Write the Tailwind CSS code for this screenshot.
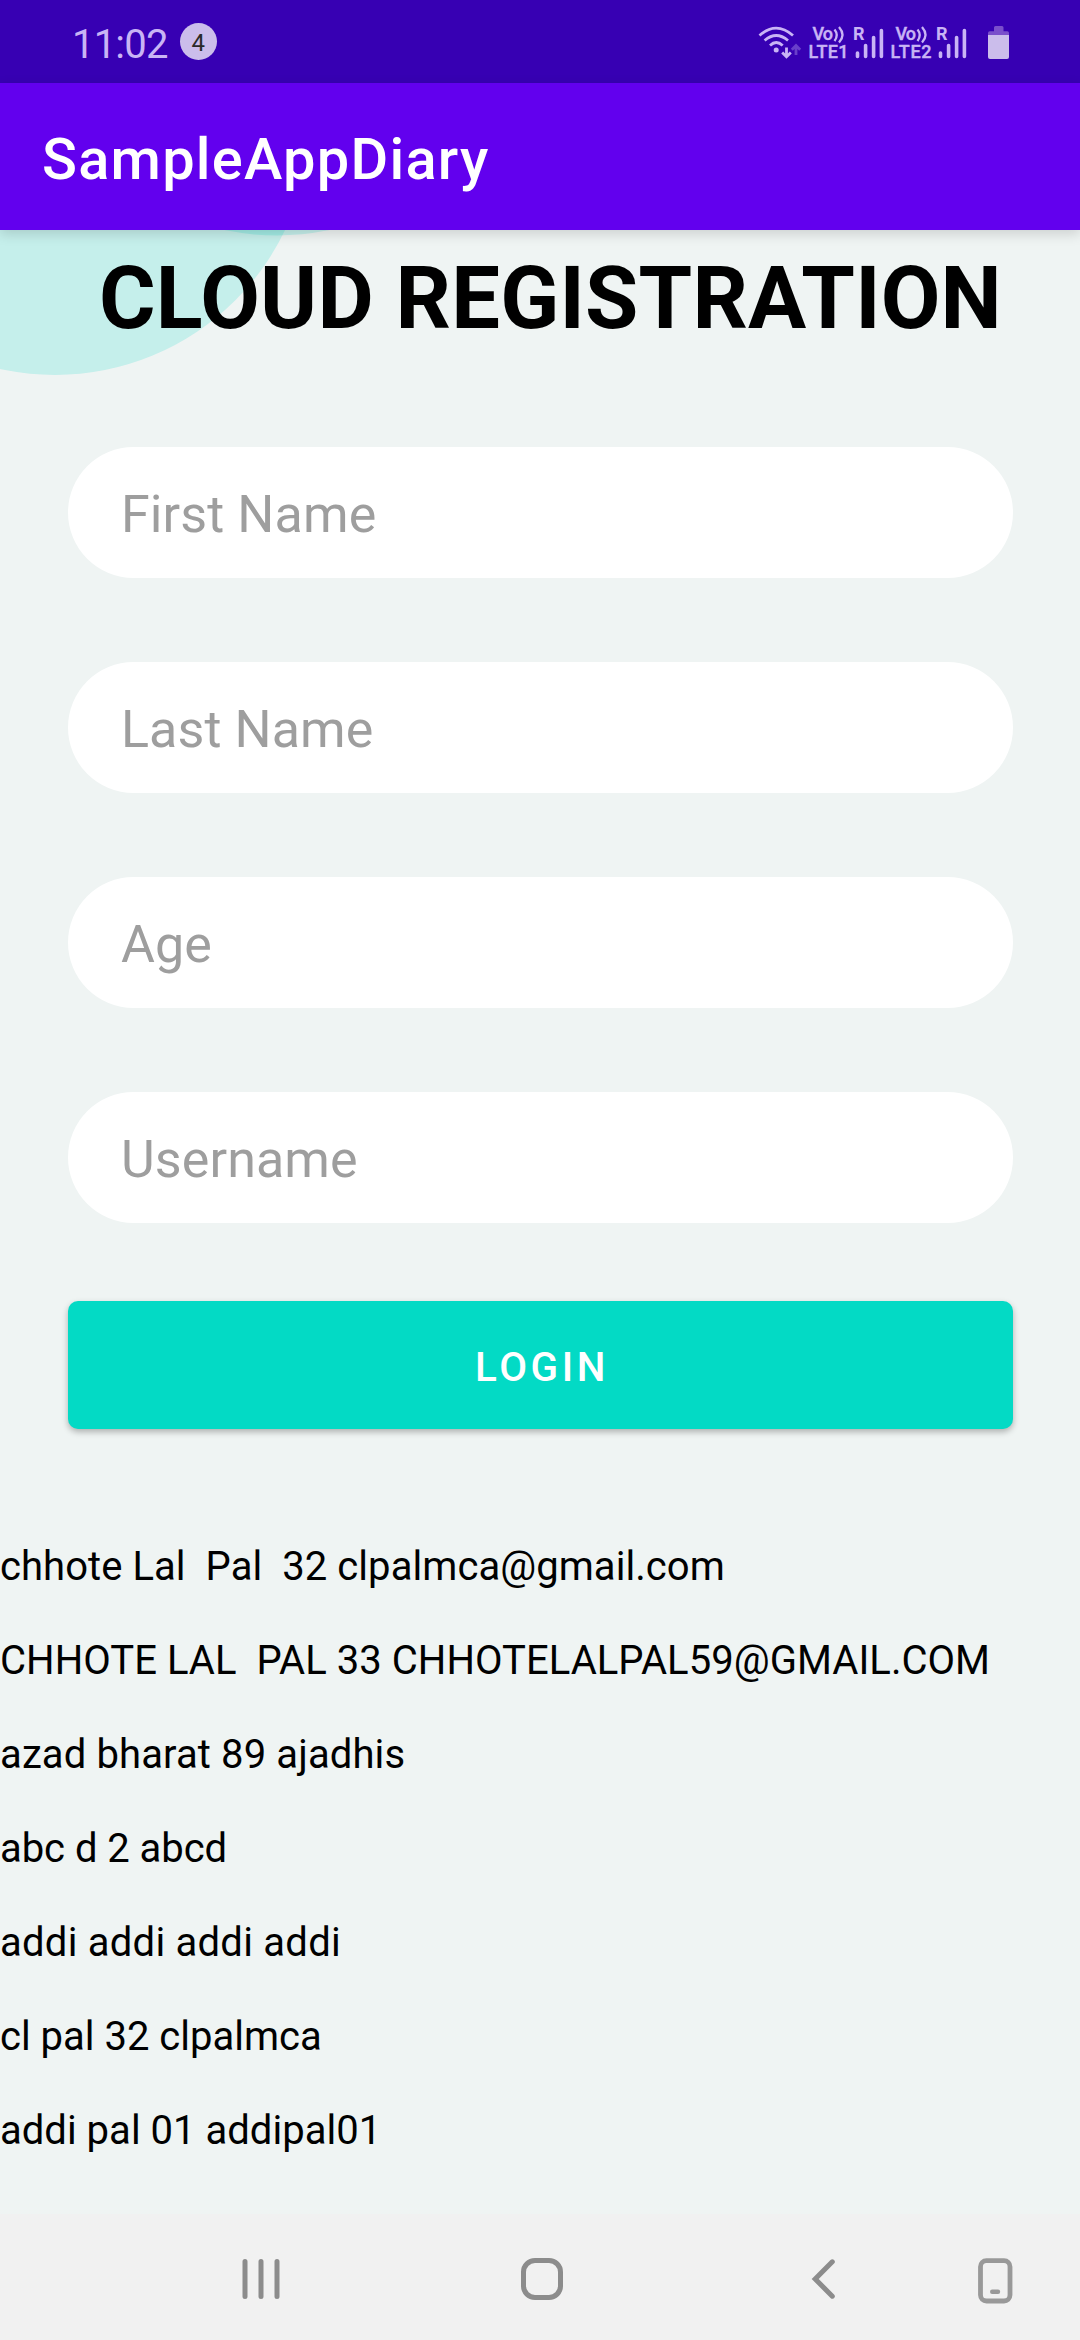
<!DOCTYPE html>
<html lang="en">
<head>
<meta charset="utf-8">
<title>SampleAppDiary</title>
<script src="https://cdn.jsdelivr.net/npm/@tailwindcss/browser@4"></script>
</head>
<body class="flex h-[2340px] w-[1080px] flex-col overflow-hidden bg-[#eff4f3] font-['Roboto',sans-serif]">

  <!-- Status bar -->
  <div class="flex h-[83px] shrink-0 items-center bg-[#3700b3] pr-[71px] pl-[72px] text-[#c9b4f5]">
    <span class="pt-[6px] text-[40px] leading-[48px] tracking-[-0.8px]">11:02</span>
    <span class="ml-[12px] flex size-[37px] items-center justify-center rounded-full bg-[#cbbdeb] pt-[3px] text-[24px] leading-none text-[#2a2a2a]">4</span>
    <div class="ml-auto flex items-center">
      <svg class="h-[83px] w-[46px]" viewBox="756 0 46 83" fill="none" stroke="currentColor" stroke-width="2.8" stroke-linecap="butt">
        <path d="M759.5 35.500Q776.200 20.800 793 35.500M764.600 40.500Q776.200 30.500 788 40.500M770 45.500Q776.200 39.500 782.700 45.500"/>
        <circle cx="776.200" cy="50" r="2.500" fill="currentColor" stroke="none"/>
        <path d="M786.500 47.500V57M782.200 52.500L786.500 56.800L790.800 52.500"/>
        <path class="opacity-35" d="M796 55V46M791.800 49.800L796 45.500L800.200 49.800"/>
      </svg>
      <svg class="h-[83px] w-[83px]" viewBox="802 0 83 83" fill="currentColor">
        <g class="font-['Roboto',sans-serif] text-[18px] font-medium">
          <text x="812.500" y="40" textLength="20.500" stroke="currentColor" stroke-width="0.4">Vo</text>
          <text x="808.500" y="58" textLength="40" stroke="currentColor" stroke-width="0.4">LTE1</text>
          <text x="853" y="40" class="font-bold">R</text>
        </g>
        <path fill="none" stroke="currentColor" stroke-width="2.300" d="M834.500 29.500Q839 35 834.500 41M839 27Q846 35 839 42.500"/>
        <path fill="none" stroke="currentColor" stroke-width="3.600" stroke-linecap="round" d="M857.500 53V56.500M865.600 45.500V56.500M873.600 37.500V56.500M881.400 30.500V56.500"/>
      </svg>
      <svg class="h-[83px] w-[83px]" viewBox="802 0 83 83" fill="currentColor">
        <g class="font-['Roboto',sans-serif] text-[18px] font-medium">
          <text x="812.500" y="40" textLength="20.500" stroke="currentColor" stroke-width="0.4">Vo</text>
          <text x="807.500" y="58" textLength="41" stroke="currentColor" stroke-width="0.4">LTE2</text>
          <text x="853" y="40" class="font-bold">R</text>
        </g>
        <path fill="none" stroke="currentColor" stroke-width="2.300" d="M834.500 29.500Q839 35 834.500 41M839 27Q846 35 839 42.500"/>
        <path fill="none" stroke="currentColor" stroke-width="3.600" stroke-linecap="round" d="M857.500 53V56.500M865.600 45.500V56.500M873.600 37.500V56.500M881.400 30.500V56.500"/>
      </svg>
      <svg class="ml-[20px] h-[83px] w-[21px]" viewBox="988 0 21 83">
        <path fill="#7a4fcb" d="M988 35V33Q988 31.300 989.700 31.300H994V27.500Q994 26 995.500 26H1002Q1003.500 26 1003.500 27.500V31.300H1007.300Q1009 31.300 1009 33V35Z"/>
        <path fill="#cbbdeb" d="M988 35H1009V57Q1009 59 1007 59H990Q988 59 988 57Z"/>
      </svg>
    </div>
  </div>

  <!-- App bar -->
  <header class="relative z-10 flex h-[147px] shrink-0 items-center bg-[#6200ee] pt-[5px] pl-[42px] shadow-[0_4px_12px_rgba(0,0,0,0.15)]">
    <h1 class="text-[57.750px] leading-[68px] font-medium tracking-[1.25px] text-white">SampleAppDiary</h1>
  </header>

  <main class="relative flex h-[1984px] shrink-0 flex-col">
    <!-- Background bubbles -->
    <svg class="absolute top-0 left-0 h-[160px] w-[560px]" viewBox="0 230 560 160" fill="#03dac5" fill-opacity="0.18">
      <circle cx="55" cy="120" r="255"/>
      <circle cx="277" cy="-19.500" r="255"/>
    </svg>

    <h2 class="relative pt-[18px] pl-[99px] text-[86.625px] leading-[102px] font-bold tracking-[0.2px] whitespace-nowrap text-black">CLOUD REGISTRATION</h2>

    <form class="relative mt-[97px] flex flex-col px-[67.500px]">
      <div class="flex flex-col gap-[84px]">
        <input class="h-[131px] rounded-full bg-white px-[53.500px] pt-[4px] text-[52px] tracking-[0.1px] placeholder:text-[#9e9e9e]" placeholder="First Name">
        <input class="h-[131px] rounded-full bg-white px-[53.500px] pt-[4px] text-[52px] tracking-[0.1px] placeholder:text-[#9e9e9e]" placeholder="Last Name">
        <input class="h-[131px] rounded-full bg-white px-[53.500px] pt-[4px] text-[52px] tracking-[0.1px] placeholder:text-[#9e9e9e]" placeholder="Age">
        <input class="h-[131px] rounded-full bg-white px-[53.500px] pt-[4px] text-[52px] tracking-[0.1px] placeholder:text-[#9e9e9e]" placeholder="Username">
      </div>
      <button type="button" class="mt-[78px] h-[128px] rounded-[10px] bg-[#03dac5] pt-[6px] pl-[4px] text-[40.425px] font-medium tracking-[0.089em] text-white shadow-[0_3px_6px_rgba(0,0,0,0.28)]">LOGIN</button>
    </form>

    <ul class="mt-[91px] flex flex-col text-[40px] leading-[94px] whitespace-pre text-black">
      <li class="tracking-[0.06px]">chhote Lal  Pal  32 clpalmca@gmail.com</li>
      <li class="tracking-[0.04px]">CHHOTE LAL  PAL 33 CHHOTELALPAL59@GMAIL.COM</li>
      <li class="tracking-[0.12px]">azad bharat 89 ajadhis</li>
      <li class="tracking-[-0.05px]">abc d 2 abcd</li>
      <li class="tracking-[0.25px]">addi addi addi addi</li>
      <li>cl pal 32 clpalmca</li>
      <li class="tracking-[0.02px]">addi pal 01 addipal01</li>
    </ul>
  </main>

  <!-- Navigation bar -->
  <nav class="flex h-[126px] shrink-0 items-center bg-[#f1f1f1] pt-[8px] pl-[241px] text-[#8c8c8c]">
    <svg class="h-[50px] w-[40px]" viewBox="241 2256 40 50" fill="none" stroke="currentColor" stroke-width="5" stroke-linecap="round"><path d="M245 2261.500V2296.500M261 2261.500V2296.500M277 2261.500V2296.500"/></svg>
    <svg class="ml-[238px] h-[50px] w-[46px]" viewBox="519 2256 46 50" fill="none" stroke="currentColor" stroke-width="5"><rect x="523.500" y="2260.500" width="37" height="37" rx="11.500"/></svg>
    <svg class="ml-[245px] h-[50px] w-[28px]" viewBox="810 2256 28 50" fill="none" stroke="currentColor" stroke-width="5" stroke-linecap="round"><path d="M832.300 2261.800L815.200 2279L832.300 2296.200"/></svg>
    <svg class="ml-[138px] h-[50px] w-[40px] text-[#999]" viewBox="976 2256 40 50" fill="none" stroke="currentColor" stroke-width="4.800"><rect x="980.500" y="2260.700" width="29.500" height="40.300" rx="6"/><path stroke-width="4.400" stroke-linecap="round" d="M992.200 2291.800H998"/></svg>
  </nav>
</body>
</html>
